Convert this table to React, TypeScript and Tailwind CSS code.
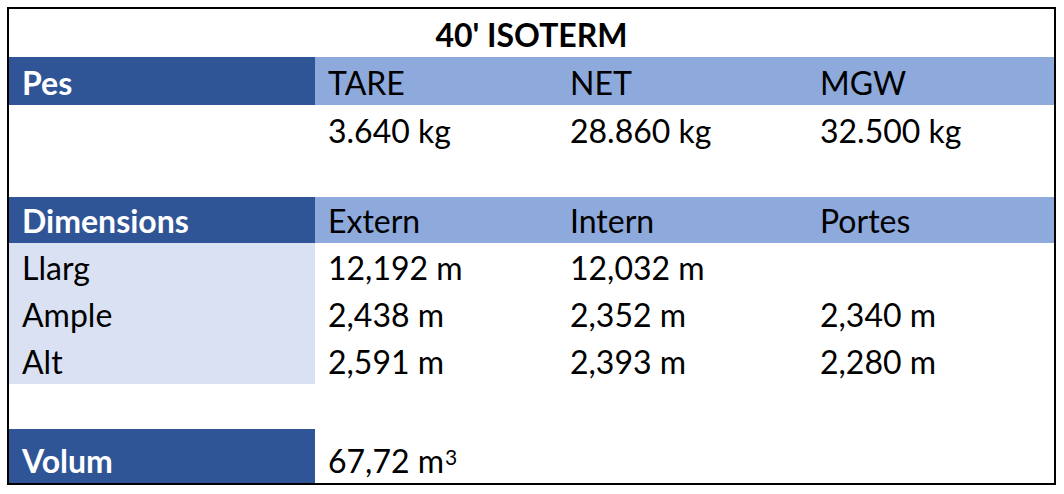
const dark = "bg-[#2f5597] text-white font-bold";
const light = "bg-[#8ea9db]";
const pale = "bg-[#d9e1f2]";

function Cell({ children, className = "" }: { children?: React.ReactNode; className?: string }) {
  return (
    <div className={`flex items-end pl-[13px] pb-[6px] ${className}`}>
      <span>{children}</span>
    </div>
  );
}

export default function App() {
  return (
    <div className="w-[1064px] h-[494px] bg-white pl-[7px] pt-[7px]" style={{ fontFamily: "Lato, 'Open Sans', sans-serif" }}>
      <div
        className="w-[1049px] border-2 border-black grid grid-cols-[306px_242px_250px_247px] text-[32px] leading-none text-black"
        style={{ gridTemplateRows: "48px 48px 48px 44px 46px 47px 47px 47px 45px 54px" }}
      >
        <div className="col-span-4 flex items-end justify-center pb-[6px] font-bold">40' ISOTERM</div>

        <Cell className={dark}>Pes</Cell>
        <Cell className={light}>TARE</Cell>
        <Cell className={light}>NET</Cell>
        <Cell className={light}>MGW</Cell>

        <Cell />
        <Cell>3.640 kg</Cell>
        <Cell>28.860 kg</Cell>
        <Cell>32.500 kg</Cell>

        <div className="col-span-4" />

        <Cell className={dark}>Dimensions</Cell>
        <Cell className={light}>Extern</Cell>
        <Cell className={light}>Intern</Cell>
        <Cell className={light}>Portes</Cell>

        <Cell className={pale}>Llarg</Cell>
        <Cell>12,192 m</Cell>
        <Cell>12,032 m</Cell>
        <Cell />

        <Cell className={pale}>Ample</Cell>
        <Cell>2,438 m</Cell>
        <Cell>2,352 m</Cell>
        <Cell>2,340 m</Cell>

        <Cell className={pale}>Alt</Cell>
        <Cell>2,591 m</Cell>
        <Cell>2,393 m</Cell>
        <Cell>2,280 m</Cell>

        <div className="col-span-4" />

        <Cell className={dark}>Volum</Cell>
        <Cell>
          67,72 m<span className="text-[21px] align-baseline relative -top-[8px] ml-[1px]">3</span>
        </Cell>
        <Cell />
        <Cell />
      </div>
    </div>
  );
}
